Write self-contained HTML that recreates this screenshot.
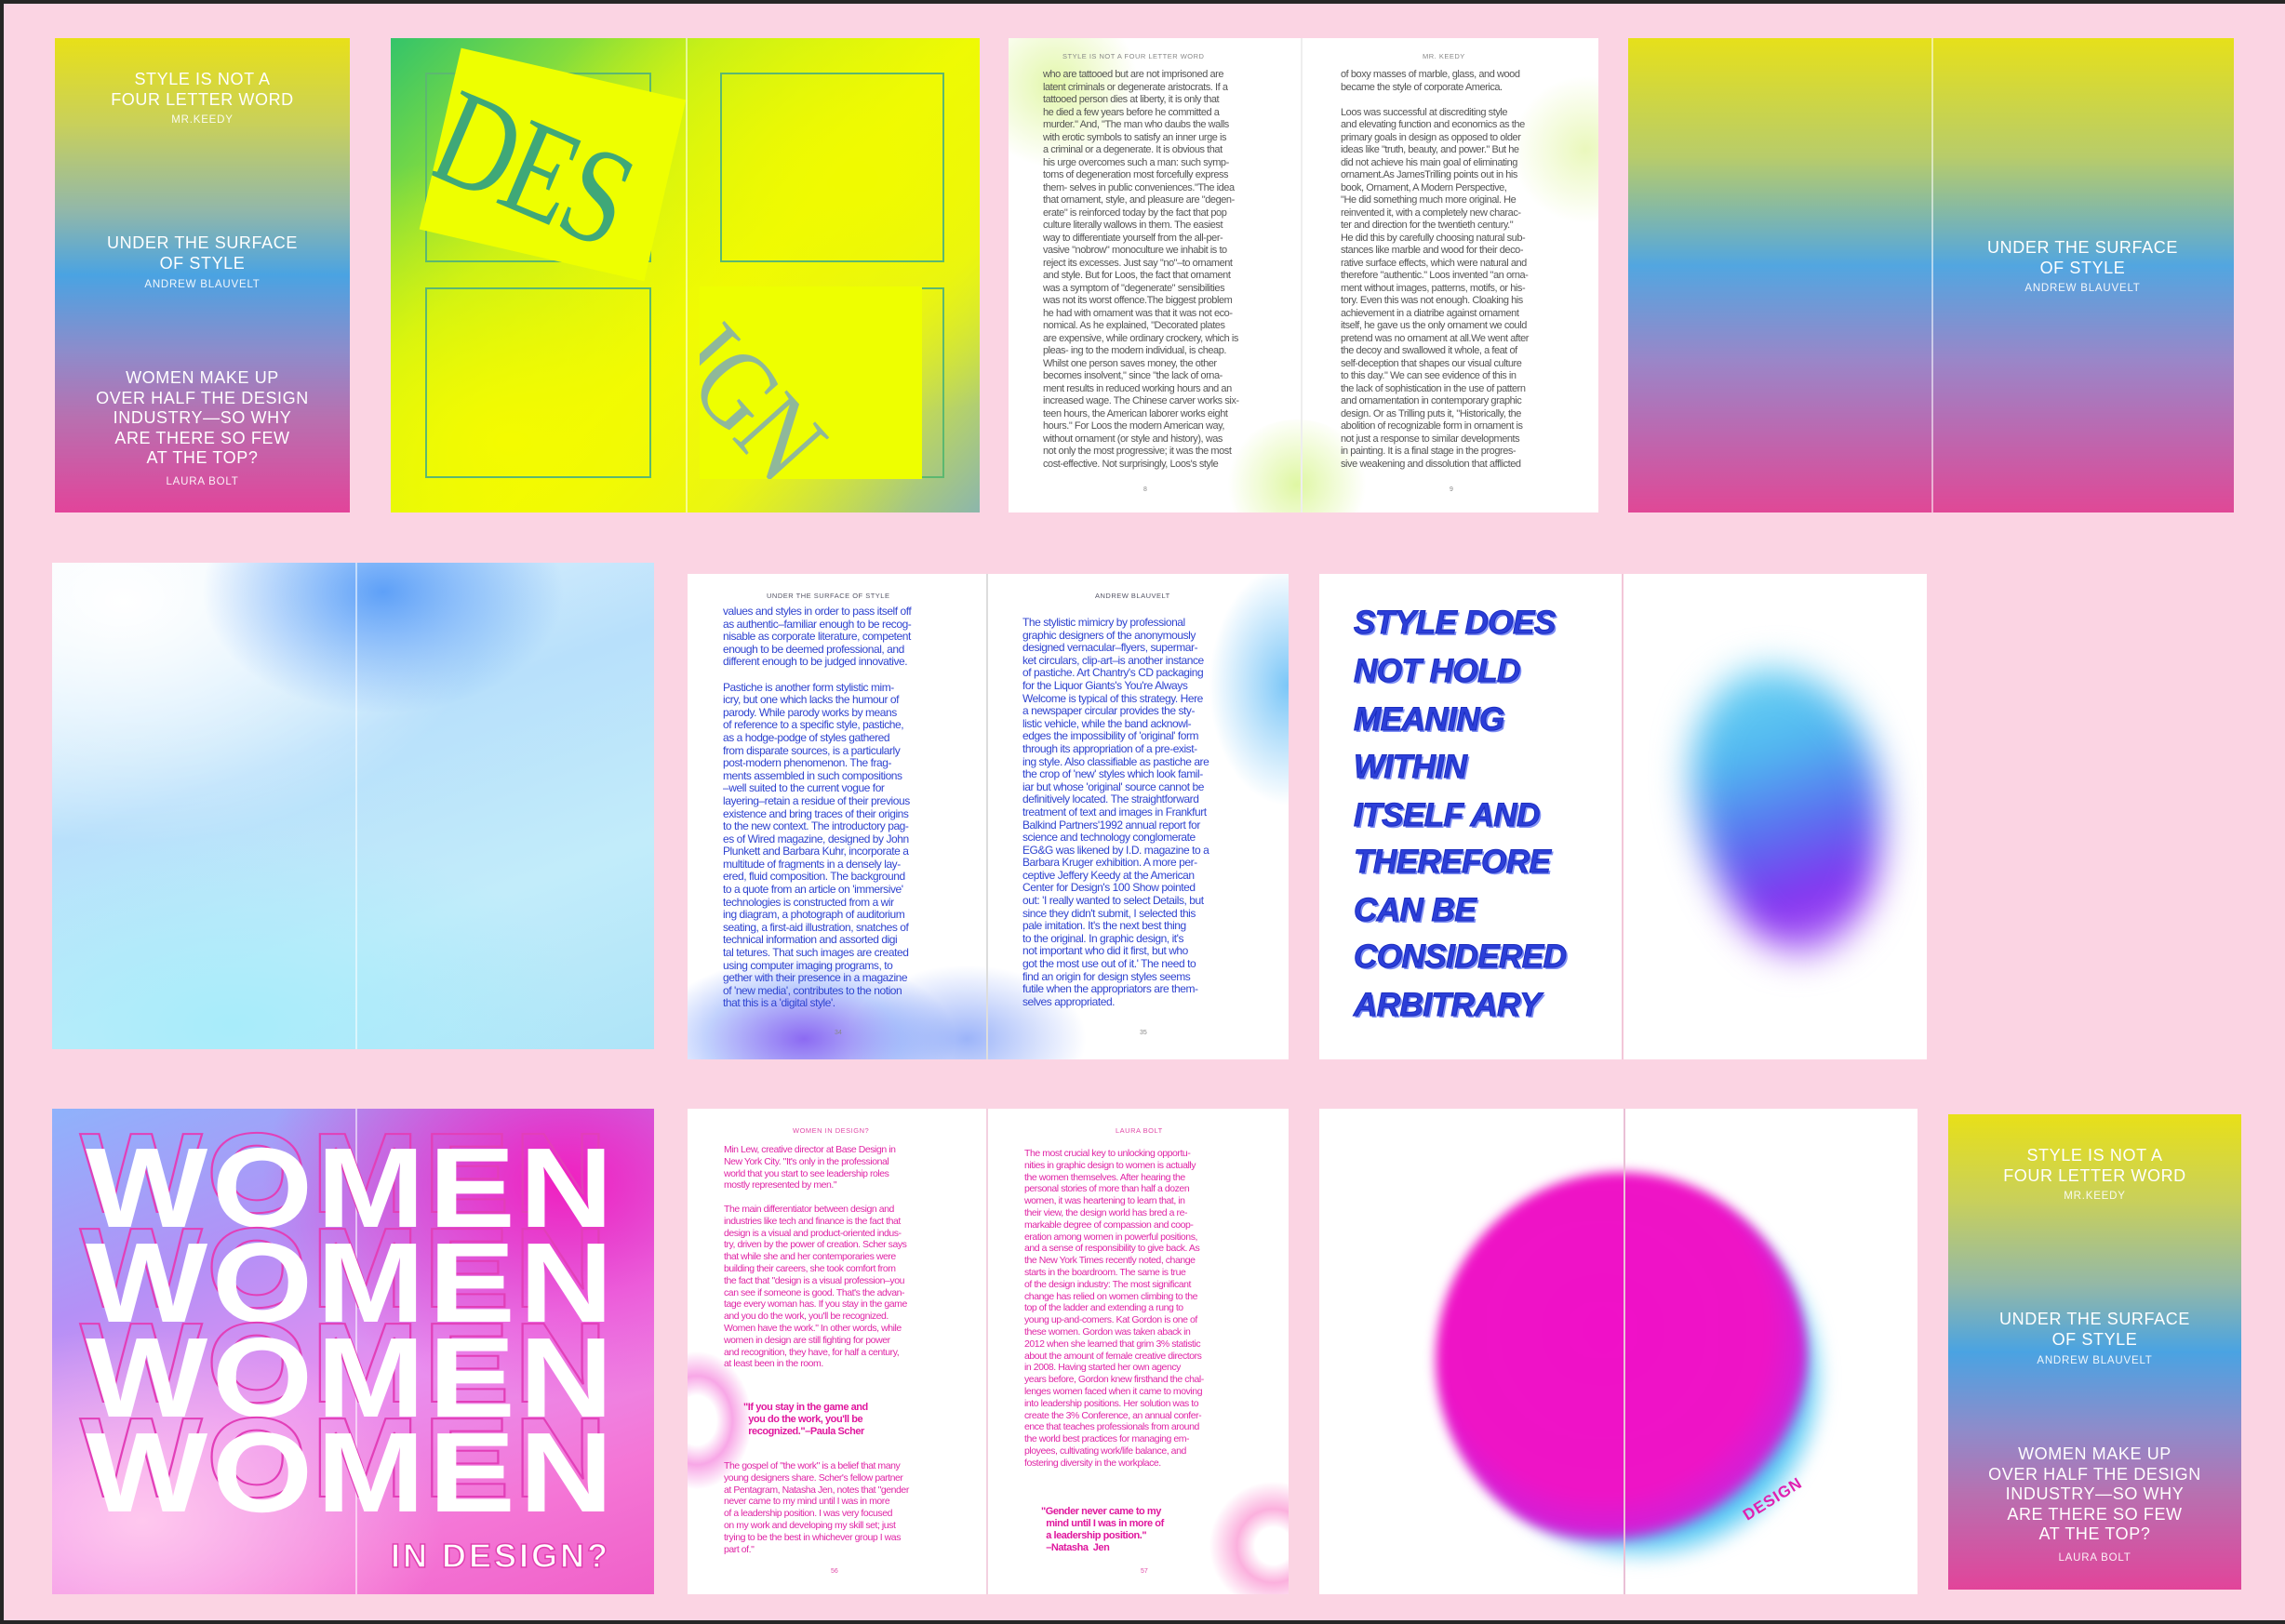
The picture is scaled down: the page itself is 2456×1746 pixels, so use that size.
<!DOCTYPE html>
<html><head><meta charset="utf-8"><style>
*{margin:0;padding:0;box-sizing:border-box}
body{width:2456px;height:1746px;background:#262626;position:relative;overflow:hidden;font-family:"Liberation Sans",sans-serif}
#bg{position:absolute;left:4px;top:4px;width:2452px;height:1738px;background:#fbd4e3}
.p{position:absolute;overflow:hidden}
.spine{position:absolute;top:0;bottom:0;width:2px;background:rgba(255,255,255,.55)}
.cov{background:linear-gradient(180deg,#e8e018 0%,#c9d05a 18%,#93b8a8 36%,#4aa3e2 50%,#8d8ccb 66%,#b870b0 80%,#e2449a 100%)}
.ct{position:absolute;left:0;right:0;text-align:center;color:#fff;font-size:18px;letter-spacing:.6px;line-height:21.5px}
.ca{position:absolute;left:0;right:0;text-align:center;color:#fff;font-size:11.5px;letter-spacing:.8px;opacity:.92}
.tx{position:absolute;white-space:pre;font-size:11px;line-height:13.5px;letter-spacing:-.45px;color:#555}
.hd{position:absolute;font-size:7.5px;letter-spacing:.5px;color:#888;white-space:nowrap}
.pn{position:absolute;font-size:7px;color:#888}
.blur{position:absolute;border-radius:50%}
.sq{position:absolute;border:2px solid #5cb870}
.w{position:absolute;font-weight:bold;font-size:122px;letter-spacing:4px;line-height:1;color:#fff;white-space:nowrap;transform:scaleX(1.14);transform-origin:left top}
.wg{position:absolute;font-weight:bold;font-size:122px;letter-spacing:4px;line-height:1;color:transparent;-webkit-text-stroke:2px #e23fb8;white-space:nowrap;transform:scaleX(1.14);transform-origin:left top}
.sd{position:absolute;left:1455px;font-weight:bold;font-style:italic;font-size:35px;letter-spacing:-0.5px;color:#2c3fd8;white-space:nowrap;-webkit-text-stroke:1px #1a2cc0;text-shadow:2px 2px 0 #7f8ff5}
</style></head><body>
<div id="bg"></div>

<!-- P1 cover -->
<div class="p cov" style="left:59px;top:41px;width:317px;height:510px">
 <div class="ct" style="top:34px">STYLE IS NOT A<br>FOUR LETTER WORD</div>
 <div class="ca" style="top:82px">MR.KEEDY</div>
 <div class="ct" style="top:210px">UNDER THE SURFACE<br>OF STYLE</div>
 <div class="ca" style="top:259px">ANDREW BLAUVELT</div>
 <div class="ct" style="top:355px">WOMEN MAKE UP<br>OVER HALF THE DESIGN<br>INDUSTRY—SO WHY<br>ARE THERE SO FEW<br>AT THE TOP?</div>
 <div class="ca" style="top:471px">LAURA BOLT</div>
</div>

<!-- P2 DESIGN -->
<div class="p" style="left:420px;top:41px;width:633px;height:510px;background:radial-gradient(ellipse 70% 60% at 20% 85%,#f4fb00 0%,rgba(240,250,0,0) 100%),radial-gradient(ellipse 60% 50% at 80% 30%,#f0fa00 0%,rgba(240,250,0,0) 100%),linear-gradient(135deg,#34c46a 0%,#b8ec20 30%,#eefa05 55%,#e4f020 75%,#8cb6ac 100%)">
 <div class="sq" style="left:37px;top:37px;width:243px;height:204px"></div>
 <div class="sq" style="left:37px;top:268px;width:243px;height:205px"></div>
 <div class="sq" style="left:354px;top:37px;width:241px;height:204px"></div>
 <div class="sq" style="left:354px;top:268px;width:241px;height:205px"></div>
 <div style="position:absolute;left:50px;top:36px;width:248px;height:200px;background:#eeff00;transform:rotate(13deg);overflow:hidden">
  <div style="position:absolute;left:12px;top:18px;font-family:'Liberation Serif',serif;font-size:118px;color:#3fa878;line-height:1;letter-spacing:-4px;transform:rotate(10deg) scaleY(1.25);transform-origin:left top">DES</div>
 </div>
 <div style="position:absolute;left:332px;top:267px;width:239px;height:207px;background:#eeff00;overflow:hidden">
  <div style="position:absolute;left:40px;top:20px;font-family:'Liberation Serif',serif;font-size:120px;color:#8fb89a;line-height:1;letter-spacing:-4px;transform:rotate(48deg) scaleX(.85);transform-origin:left top;white-space:nowrap">IGN</div>
 </div>
 <div class="spine" style="left:317px"></div>
</div>

<!-- P3 text spread -->
<div class="p" style="left:1084px;top:41px;width:634px;height:510px;background:#fff">
 <div class="blur" style="left:-40px;top:-40px;width:180px;height:180px;background:radial-gradient(circle,rgba(220,245,150,.8),rgba(255,255,255,0) 70%)"></div>
 <div class="blur" style="left:230px;top:410px;width:160px;height:140px;background:radial-gradient(circle,rgba(215,245,140,.8),rgba(255,255,255,0) 70%)"></div>
 <div class="blur" style="left:540px;top:40px;width:160px;height:160px;background:radial-gradient(circle,rgba(225,245,160,.7),rgba(255,255,255,0) 70%)"></div>
 <div class="spine" style="left:314px;background:#eee"></div>
 <div class="hd" style="left:58px;top:15px">STYLE IS NOT A FOUR LETTER WORD</div>
 <div class="hd" style="left:445px;top:15px">MR. KEEDY</div>
 <div class="tx" style="left:37px;top:33px">who are tattooed but are not imprisoned are
latent criminals or degenerate aristocrats. If a
tattooed person dies at liberty, it is only that
he died a few years before he committed a
murder." And, "The man who daubs the walls
with erotic symbols to satisfy an inner urge is
a criminal or a degenerate. It is obvious that
his urge overcomes such a man: such symp-
toms of degeneration most forcefully express
them- selves in public conveniences."The idea
that ornament, style, and pleasure are "degen-
erate" is reinforced today by the fact that pop
culture literally wallows in them. The easiest
way to differentiate yourself from the all-per-
vasive "nobrow" monoculture we inhabit is to
reject its excesses. Just say "no"–to ornament
and style. But for Loos, the fact that ornament
was a symptom of "degenerate" sensibilities
was not its worst offence.The biggest problem
he had with ornament was that it was not eco-
nomical. As he explained, "Decorated plates
are expensive, while ordinary crockery, which is
pleas- ing to the modern individual, is cheap.
Whilst one person saves money, the other
becomes insolvent," since "the lack of orna-
ment results in reduced working hours and an
increased wage. The Chinese carver works six-
teen hours, the American laborer works eight
hours." For Loos the modern American way,
without ornament (or style and history), was
not only the most progressive; it was the most
cost-effective. Not surprisingly, Loos's style</div>
 <div class="tx" style="left:357px;top:33px">of boxy masses of marble, glass, and wood
became the style of corporate America.

Loos was successful at discrediting style
and elevating function and economics as the
primary goals in design as opposed to older
ideas like "truth, beauty, and power." But he
did not achieve his main goal of eliminating
ornament.As JamesTrilling points out in his
book, Ornament, A Modern Perspective,
"He did something much more original. He
reinvented it, with a completely new charac-
ter and direction for the twentieth century."
He did this by carefully choosing natural sub-
stances like marble and wood for their deco-
rative surface effects, which were natural and
therefore "authentic." Loos invented "an orna-
ment without images, patterns, motifs, or his-
tory. Even this was not enough. Cloaking his
achievement in a diatribe against ornament
itself, he gave us the only ornament we could
pretend was no ornament at all.We went after
the decoy and swallowed it whole, a feat of
self-deception that shapes our visual culture
to this day." We can see evidence of this in
the lack of sophistication in the use of pattern
and ornamentation in contemporary graphic
design. Or as Trilling puts it, "Historically, the
abolition of recognizable form in ornament is
not just a response to similar developments
in painting. It is a final stage in the progres-
sive weakening and dissolution that afflicted</div>
 <div class="pn" style="left:145px;top:482px">8</div>
 <div class="pn" style="left:474px;top:482px">9</div>
</div>

<!-- P4 gradient spread -->
<div class="p cov" style="left:1750px;top:41px;width:651px;height:510px;background:linear-gradient(180deg,#e6e01a 0%,#b8cc6a 25%,#52a6e0 48%,#9a86c8 68%,#e04896 100%)">
 <div class="spine" style="left:326px"></div>
 <div class="ct" style="left:326px;top:215px">UNDER THE SURFACE<br>OF STYLE</div>
 <div class="ca" style="left:326px;top:263px">ANDREW BLAUVELT</div>
</div>

<!-- P5 light blue -->
<div class="p" style="left:56px;top:605px;width:647px;height:523px;background:radial-gradient(ellipse 30% 25% at 55% 6%,#5ea0f8 0%,rgba(120,180,250,0) 100%),radial-gradient(ellipse 60% 50% at 12% 8%,#ffffff 0%,rgba(255,255,255,0) 100%),radial-gradient(ellipse 60% 40% at 30% 95%,#a8ecfa 0%,rgba(168,236,250,0) 100%),linear-gradient(160deg,#eef8fd 0%,#b8e0fb 40%,#c2ecfa 70%,#aee4f8 100%)">
 <div class="spine" style="left:326px"></div>
</div>

<!-- P6 blue text -->
<div class="p" style="left:739px;top:617px;width:646px;height:522px;background:#fff">
 <div class="blur" style="left:-40px;top:410px;width:330px;height:180px;background:radial-gradient(ellipse,rgba(120,80,240,.85),rgba(100,140,250,.4) 45%,rgba(255,255,255,0) 70%)"></div>
 <div class="blur" style="left:170px;top:420px;width:260px;height:160px;background:radial-gradient(ellipse,rgba(90,130,245,.6),rgba(255,255,255,0) 70%)"></div>
 <div class="blur" style="left:560px;top:-10px;width:170px;height:260px;background:radial-gradient(ellipse,rgba(80,180,245,.75),rgba(255,255,255,0) 70%)"></div>
 <div class="spine" style="left:321px;background:#ddd"></div>
 <div class="hd" style="left:85px;top:19px;color:#556">UNDER THE SURFACE OF STYLE</div>
 <div class="hd" style="left:438px;top:19px;color:#556">ANDREW BLAUVELT</div>
 <div class="tx" style="left:38px;top:34px;color:#3044d0;font-size:12px;line-height:13.6px">values and styles in order to pass itself off
as authentic–familiar enough to be recog-
nisable as corporate literature, competent
enough to be deemed professional, and
different enough to be judged innovative.

Pastiche is another form stylistic mim-
icry, but one which lacks the humour of
parody. While parody works by means
of reference to a specific style, pastiche,
as a hodge-podge of styles gathered
from disparate sources, is a particularly
post-modern phenomenon. The frag-
ments assembled in such compositions
–well suited to the current vogue for
layering–retain a residue of their previous
existence and bring traces of their origins
to the new context. The introductory pag-
es of Wired magazine, designed by John
Plunkett and Barbara Kuhr, incorporate a
multitude of fragments in a densely lay-
ered, fluid composition. The background
to a quote from an article on 'immersive'
technologies is constructed from a wir
ing diagram, a photograph of auditorium
seating, a first-aid illustration, snatches of
technical information and assorted digi
tal tetures. That such images are created
using computer imaging programs, to
gether with their presence in a magazine
of 'new media', contributes to the notion
that this is a 'digital style'.</div>
 <div class="tx" style="left:360px;top:46px;color:#3044d0;font-size:12px;line-height:13.6px">The stylistic mimicry by professional
graphic designers of the anonymously
designed vernacular–flyers, supermar-
ket circulars, clip-art–is another instance
of pastiche. Art Chantry's CD packaging
for the Liquor Giants's You're Always
Welcome is typical of this strategy. Here
a newspaper circular provides the sty-
listic vehicle, while the band acknowl-
edges the impossibility of 'original' form
through its appropriation of a pre-exist-
ing style. Also classifiable as pastiche are
the crop of 'new' styles which look famil-
iar but whose 'original' source cannot be
definitively located. The straightforward
treatment of text and images in Frankfurt
Balkind Partners'1992 annual report for
science and technology conglomerate
EG&G was likened by I.D. magazine to a
Barbara Kruger exhibition. A more per-
ceptive Jeffery Keedy at the American
Center for Design's 100 Show pointed
out: 'I really wanted to select Details, but
since they didn't submit, I selected this
pale imitation. It's the next best thing
to the original. In graphic design, it's
not important who did it first, but who
got the most use out of it.' The need to
find an origin for design styles seems
futile when the appropriators are them-
selves appropriated.</div>
 <div class="pn" style="left:158px;top:490px">34</div>
 <div class="pn" style="left:486px;top:490px">35</div>
</div>

<!-- P7 style does not hold -->
<div class="p" style="left:1418px;top:617px;width:653px;height:522px;background:#fff">
 <div class="spine" style="left:325px;background:#f3c6d8"></div>
 <div class="blur" style="left:405px;top:100px;width:200px;height:310px;border-radius:45% 55% 50% 50%/40% 45% 55% 60%;background:linear-gradient(170deg,#70d6f4 0%,#50b8f0 30%,#5a70f0 55%,#8a2cf0 80%,#c8a0fa 100%);filter:blur(20px);transform:rotate(-8deg)"></div>
</div>
<div class="sd" style="top:650px">STYLE DOES</div>
<div class="sd" style="top:702px">NOT HOLD</div>
<div class="sd" style="top:754px">MEANING</div>
<div class="sd" style="top:805px">WITHIN</div>
<div class="sd" style="top:857px">ITSELF AND</div>
<div class="sd" style="top:907px">THEREFORE</div>
<div class="sd" style="top:959px">CAN BE</div>
<div class="sd" style="top:1009px">CONSIDERED</div>
<div class="sd" style="top:1061px">ARBITRARY</div>

<!-- P8 WOMEN -->
<div class="p" style="left:56px;top:1192px;width:647px;height:522px;background:radial-gradient(ellipse 50% 40% at 15% 85%,#ffc8ee 0%,rgba(255,200,238,0) 100%),radial-gradient(ellipse 50% 45% at 85% 15%,#f020c0 0%,rgba(240,32,192,0) 100%),linear-gradient(160deg,#8fb2fb 0%,#b490f6 30%,#e890f0 55%,#f476d6 80%,#f060c8 100%)">
 <div class="spine" style="left:326px"></div>
 <div class="wg" style="left:30px;top:8px">WOMEN</div>
 <div class="w" style="left:36px;top:24px">WOMEN</div>
 <div class="wg" style="left:30px;top:110px">WOMEN</div>
 <div class="w" style="left:36px;top:126px">WOMEN</div>
 <div class="wg" style="left:30px;top:212px">WOMEN</div>
 <div class="w" style="left:36px;top:228px">WOMEN</div>
 <div class="wg" style="left:30px;top:314px">WOMEN</div>
 <div class="w" style="left:36px;top:330px">WOMEN</div>
 <div style="position:absolute;left:364px;top:460px;font-weight:bold;font-size:36px;letter-spacing:3px;color:#fff;-webkit-text-stroke:1.5px #e040b0;white-space:nowrap">IN DESIGN?</div>
</div>

<!-- P9 pink text -->
<div class="p" style="left:739px;top:1192px;width:646px;height:522px;background:#fff">
 <div class="blur" style="left:-50px;top:260px;width:120px;height:150px;background:radial-gradient(ellipse,rgba(255,255,255,1) 25%,rgba(245,130,220,.7) 45%,rgba(255,255,255,0) 70%)"></div>
 <div class="blur" style="left:560px;top:400px;width:140px;height:140px;background:radial-gradient(circle,rgba(255,255,255,1) 20%,rgba(250,150,210,.75) 40%,rgba(255,255,255,0) 70%)"></div>
 <div class="spine" style="left:321px;background:#f3d0e0"></div>
 <div class="hd" style="left:113px;top:19px;color:#e04aa8">WOMEN IN DESIGN?</div>
 <div class="hd" style="left:460px;top:19px;color:#e04aa8">LAURA BOLT</div>
 <div class="tx" style="left:39px;top:38px;color:#e026a6;font-size:10.5px;line-height:12.8px">Min Lew, creative director at Base Design in
New York City. "It's only in the professional
world that you start to see leadership roles
mostly represented by men."

The main differentiator between design and
industries like tech and finance is the fact that
design is a visual and product-oriented indus-
try, driven by the power of creation. Scher says
that while she and her contemporaries were
building their careers, she took comfort from
the fact that "design is a visual profession–you
can see if someone is good. That's the advan-
tage every woman has. If you stay in the game
and you do the work, you'll be recognized.
Women have the work." In other words, while
women in design are still fighting for power
and recognition, they have, for half a century,
at least been in the room.</div>
 <div class="tx" style="left:60px;top:315px;color:#e0189e;font-weight:bold;font-size:11px;line-height:13px">"If you stay in the game and
  you do the work, you'll be
  recognized."–Paula Scher</div>
 <div class="tx" style="left:39px;top:378px;color:#e026a6;font-size:10.5px;line-height:12.8px">The gospel of "the work" is a belief that many
young designers share. Scher's fellow partner
at Pentagram, Natasha Jen, notes that "gender
never came to my mind until I was in more
of a leadership position. I was very focused
on my work and developing my skill set; just
trying to be the best in whichever group I was
part of."</div>
 <div class="tx" style="left:362px;top:42px;color:#e026a6;font-size:10.5px;line-height:12.8px">The most crucial key to unlocking opportu-
nities in graphic design to women is actually
the women themselves. After hearing the
personal stories of more than half a dozen
women, it was heartening to learn that, in
their view, the design world has bred a re-
markable degree of compassion and coop-
eration among women in powerful positions,
and a sense of responsibility to give back. As
the New York Times recently noted, change
starts in the boardroom. The same is true
of the design industry: The most significant
change has relied on women climbing to the
top of the ladder and extending a rung to
young up-and-comers. Kat Gordon is one of
these women. Gordon was taken aback in
2012 when she learned that grim 3% statistic
about the amount of female creative directors
in 2008. Having started her own agency
years before, Gordon knew firsthand the chal-
lenges women faced when it came to moving
into leadership positions. Her solution was to
create the 3% Conference, an annual confer-
ence that teaches professionals from around
the world best practices for managing em-
ployees, cultivating work/life balance, and
fostering diversity in the workplace.</div>
 <div class="tx" style="left:380px;top:427px;color:#e0189e;font-weight:bold;font-size:11px;line-height:13px">"Gender never came to my
  mind until I was in more of
  a leadership position."
  –Natasha  Jen</div>
 <div class="pn" style="left:154px;top:494px;color:#e04aa8">56</div>
 <div class="pn" style="left:487px;top:494px;color:#e04aa8">57</div>
</div>

<!-- P10 circle -->
<div class="p" style="left:1418px;top:1192px;width:643px;height:522px;background:#fff">
 <div class="blur" style="left:150px;top:90px;width:395px;height:400px;background:radial-gradient(circle,#40c8f4 0%,#50c8f4 60%,rgba(120,220,250,0) 72%);filter:blur(8px)"></div>
 <div class="blur" style="left:125px;top:68px;width:400px;height:405px;background:radial-gradient(circle at 45% 42%,#f010c8 0%,#ee14c6 55%,#d020d8 68%,rgba(208,32,216,0) 72%);filter:blur(6px)"></div>
 <div class="spine" style="left:327px;background:#eac0d6"></div>
 <div style="position:absolute;left:452px;top:410px;font-weight:bold;font-size:17px;color:#e020b0;transform:rotate(-32deg);letter-spacing:1px">DESIGN</div>
</div>

<!-- P11 cover -->
<div class="p cov" style="left:2094px;top:1198px;width:315px;height:511px">
 <div class="ct" style="top:34px">STYLE IS NOT A<br>FOUR LETTER WORD</div>
 <div class="ca" style="top:82px">MR.KEEDY</div>
 <div class="ct" style="top:210px">UNDER THE SURFACE<br>OF STYLE</div>
 <div class="ca" style="top:259px">ANDREW BLAUVELT</div>
 <div class="ct" style="top:355px">WOMEN MAKE UP<br>OVER HALF THE DESIGN<br>INDUSTRY—SO WHY<br>ARE THERE SO FEW<br>AT THE TOP?</div>
 <div class="ca" style="top:471px">LAURA BOLT</div>
</div>
</body></html>
